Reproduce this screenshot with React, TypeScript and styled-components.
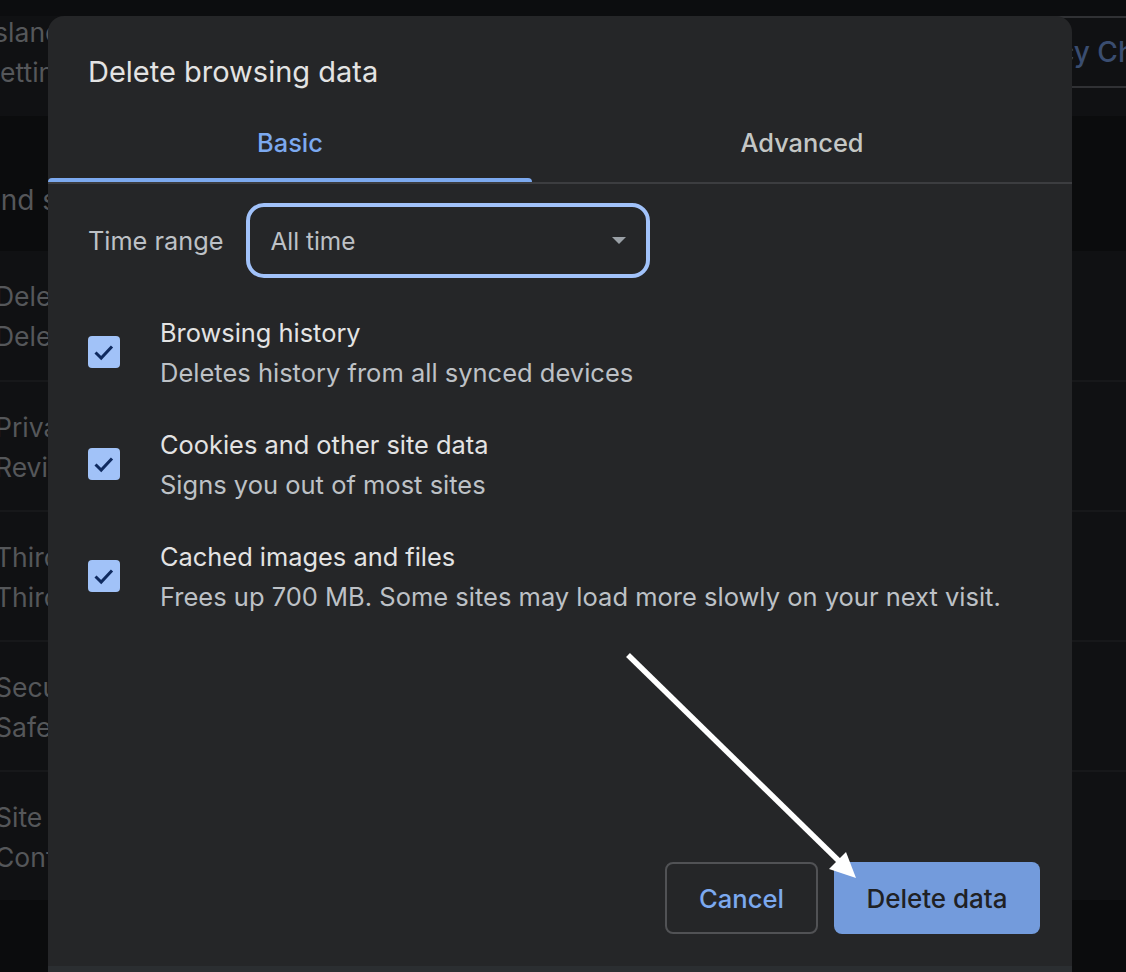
import React from "react";
import styled, { createGlobalStyle } from "styled-components";

const Global = createGlobalStyle`
  html, body { margin: 0; padding: 0; background: #0b0c0d; }
  body { font-family: Inter, "Liberation Sans", sans-serif; -webkit-font-smoothing: antialiased; }
`;

const Page = styled.div`
  position: relative;
  width: 1126px;
  height: 972px;
  overflow: hidden;
  background: #0b0c0d;
`;

const Header = styled.header`
  height: 116px;
  box-sizing: border-box;
  border-top: 16px solid #0c0d0f;
  background: #101113;
  display: flex;
  justify-content: space-between;
  align-items: flex-start;
`;

const HeaderText = styled.div`
  display: flex;
  flex-direction: column;
  margin-top: -4px;
`;

const BackLine = styled.div<{ $shift: number }>`
  margin-left: ${(p) => p.$shift}px;
  height: 40px;
  line-height: 40px;
  font-size: 26.5px;
  color: #55575a;
  white-space: nowrap;
`;

const HeaderAction = styled.div`
  margin-right: -80px;
  width: 300px;
  height: 72px;
  box-sizing: border-box;
  border-top: 2px solid #303134;
  border-bottom: 2px solid #303134;
  display: flex;
  align-items: center;
  justify-content: flex-end;
  padding-right: 23px;
  font-size: 28px;
  font-weight: 500;
  color: #3a4d70;
  white-space: nowrap;
`;

const SectionTitle = styled.h2`
  margin: 0 0 0 -121px;
  height: 135px;
  box-sizing: border-box;
  padding-top: 66px;
  line-height: 36px;
  font-size: 28px;
  font-weight: 400;
  color: #55575a;
  white-space: nowrap;
`;

const Card = styled.section`
  height: 649px;
  background: #101113;
`;

const BackRow = styled.div`
  height: 130px;
  box-sizing: border-box;
  padding-top: 25px;
  border-top: 2px solid #17181a;
  &:first-child { border-top: 0; padding-top: 25px; height: 129px; }
`;

const Dialog = styled.div`
  position: absolute;
  left: 48px;
  top: 16px;
  width: 1024px;
  height: 956px;
  background: #252628;
  border-radius: 16px 16px 0 0;
  display: flex;
  flex-direction: column;
  overflow: hidden;
`;

const DialogTitle = styled.h1`
  margin: 0;
  padding: 37px 40px 0;
  height: 88px;
  box-sizing: border-box;
  line-height: 38px;
  font-size: 29px;
  font-weight: 400;
  color: #e3e3e3;
`;

const Tabs = styled.div`
  display: grid;
  grid-template-columns: 484px 540px;
  height: 78px;
  border-bottom: 2px solid #3c3d40;
`;

const Tab = styled.div<{ $active?: boolean }>`
  position: relative;
  display: flex;
  align-items: center;
  justify-content: center;
  padding-bottom: 2px;
  font-size: 25.4px;
  font-weight: 500;
  color: ${(p) => (p.$active ? "#7ca9ef" : "#c4c7c5")};
  ${(p) =>
    p.$active &&
    `&::after {
      content: "";
      position: absolute;
      left: 0;
      right: 0;
      bottom: 0;
      height: 4px;
      background: #7ca9ef;
      border-radius: 4px 4px 0 0;
    }`}
`;

const RangeRow = styled.div`
  display: flex;
  align-items: center;
  gap: 23px;
  padding: 19px 40px 0;
`;

const RangeLabel = styled.span`
  font-size: 25.3px;
  color: #bdc1c6;
`;

const Select = styled.div`
  width: 404px;
  height: 75px;
  box-sizing: border-box;
  border: 4px solid #a1c2fa;
  border-radius: 18px;
  display: flex;
  align-items: center;
  justify-content: space-between;
  padding: 0 20px 0 20px;
  font-size: 24.4px;
  color: #bdc1c6;
`;

const Caret = styled.span`
  width: 0;
  height: 0;
  border-left: 7px solid transparent;
  border-right: 7px solid transparent;
  border-top: 7px solid #9aa0a6;
`;

const OptionList = styled.div`
  display: flex;
  flex-direction: column;
  padding: 35px 40px 0;
`;

const Option = styled.div`
  height: 112px;
  display: flex;
  align-items: flex-start;
  gap: 40px;
`;

const Checkbox = styled.span`
  flex: none;
  margin-top: 23px;
  width: 32px;
  height: 32px;
  border-radius: 4px;
  background: #a1c2f8;
  display: flex;
  align-items: center;
  justify-content: center;
`;

const OptionText = styled.div`
  display: flex;
  flex-direction: column;
`;

const OptionTitle = styled.div`
  height: 40px;
  line-height: 40px;
  font-size: 25.4px;
  color: #e3e3e3;
  white-space: nowrap;
`;

const OptionDesc = styled.div`
  height: 40px;
  line-height: 40px;
  font-size: 25.5px;
  color: #bdc1c6;
  white-space: nowrap;
`;

const Actions = styled.div`
  margin-top: auto;
  display: flex;
  justify-content: flex-end;
  gap: 16px;
  padding: 0 32px 32px;
`;

const CancelButton = styled.button`
  width: 153px;
  height: 72px;
  box-sizing: border-box;
  border: 2px solid #515255;
  border-radius: 8px;
  background: transparent;
  font: 500 25.6px Inter, "Liberation Sans", sans-serif;
  color: #7ca9ef;
`;

const DeleteButton = styled.button`
  width: 206px;
  height: 72px;
  border: 0;
  border-radius: 8px;
  background: #739bdc;
  font: 500 26px Inter, "Liberation Sans", sans-serif;
  color: #202124;
`;

const DialogFoot = styled.div`
  height: 6px;
  background: #2b2e31;
`;

const Arrow = styled.svg`
  position: absolute;
  left: 0;
  top: 0;
  pointer-events: none;
`;

const Check = () => (
  <svg width="24" height="24" viewBox="0 0 24 24" fill="none">
    <path d="M3.5 12.5 L9.2 18 L20 6.5" stroke="#0f2a5f" strokeWidth="3" />
  </svg>
);

const options = [
  ["Browsing history", "Deletes history from all synced devices"],
  ["Cookies and other site data", "Signs you out of most sites"],
  ["Cached images and files", "Frees up 700 MB. Some sites may load more slowly on your next visit."],
];

const backRows = [
  ["Delete", "Delete"],
  ["Privacy", "Review"],
  ["Third-party", "Third"],
  ["Security", "Safe"],
  ["Site settings", "Content"],
];

export default function App() {
  return (
    <Page>
      <Global />
      <Header>
        <HeaderText>
          <BackLine $shift={-13}>Island</BackLine>
          <BackLine $shift={-17}>Settings</BackLine>
        </HeaderText>
        <HeaderAction>Privacy Check</HeaderAction>
      </Header>
      <SectionTitle>Privacy and security</SectionTitle>
      <Card>
        {backRows.map(([a, b]) => (
          <BackRow key={a}>
            <BackLine $shift={-5}>{a}</BackLine>
            <BackLine $shift={-5}>{b}</BackLine>
          </BackRow>
        ))}
      </Card>
      <Dialog>
        <DialogTitle>Delete browsing data</DialogTitle>
        <Tabs>
          <Tab $active>Basic</Tab>
          <Tab>Advanced</Tab>
        </Tabs>
        <RangeRow>
          <RangeLabel>Time range</RangeLabel>
          <Select>
            All time
            <Caret />
          </Select>
        </RangeRow>
        <OptionList>
          {options.map(([t, d]) => (
            <Option key={t}>
              <Checkbox>
                <Check />
              </Checkbox>
              <OptionText>
                <OptionTitle>{t}</OptionTitle>
                <OptionDesc>{d}</OptionDesc>
              </OptionText>
            </Option>
          ))}
        </OptionList>
        <Actions>
          <CancelButton>Cancel</CancelButton>
          <DeleteButton>Delete data</DeleteButton>
        </Actions>
        <DialogFoot />
      </Dialog>
      <Arrow width="1126" height="972" viewBox="0 0 1126 972">
        <line x1="628" y1="655" x2="842" y2="864" stroke="#fff" strokeWidth="5.5" />
        <polygon points="856,878 829,869 846,852" fill="#fff" />
      </Arrow>
    </Page>
  );
}
